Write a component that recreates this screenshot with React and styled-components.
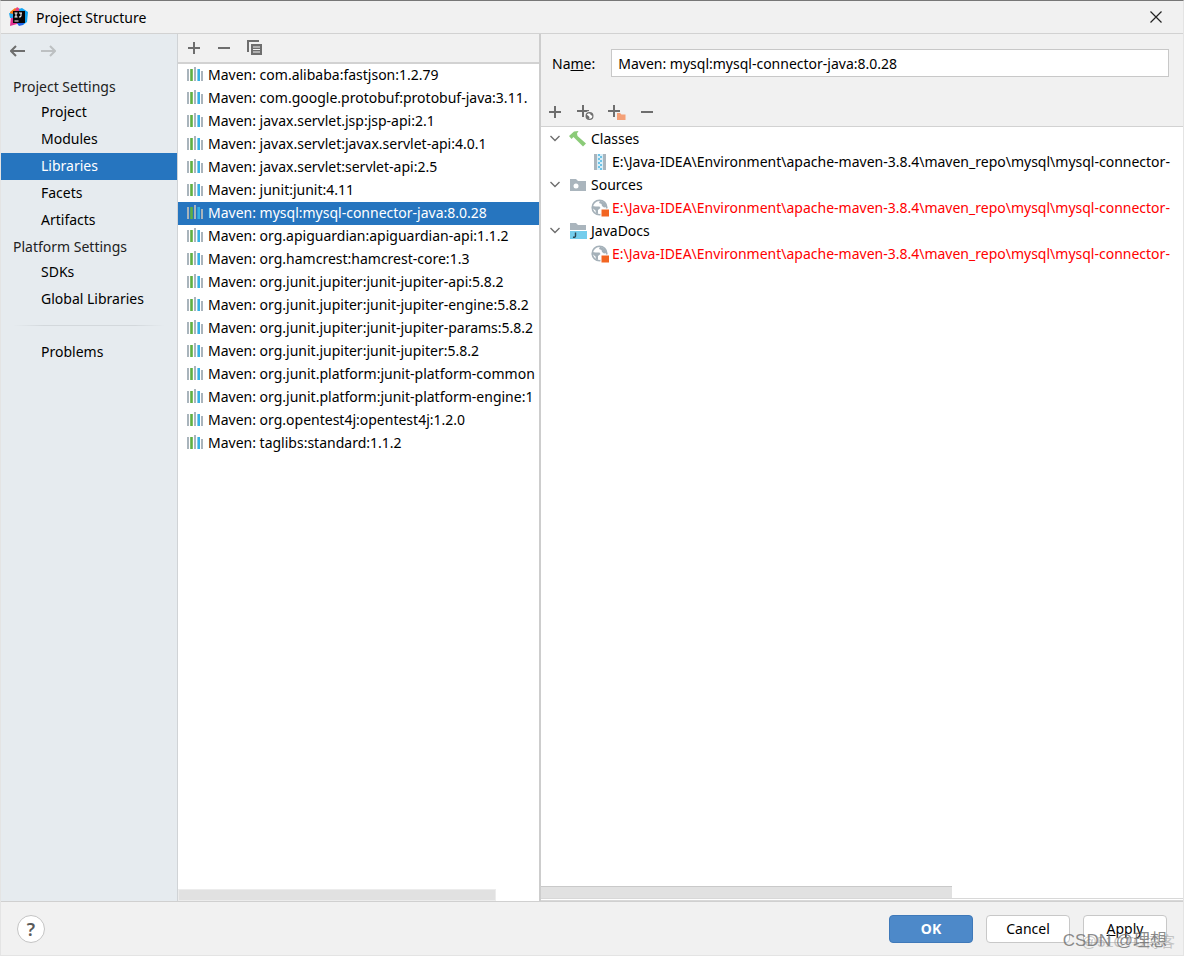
import { useState } from "react";
import styled, { createGlobalStyle } from "styled-components";

const projectItems = ["Project", "Modules", "Libraries", "Facets", "Artifacts"];
const platformItems = ["SDKs", "Global Libraries"];

const libraries = [
  "Maven: com.alibaba:fastjson:1.2.79",
  "Maven: com.google.protobuf:protobuf-java:3.11.",
  "Maven: javax.servlet.jsp:jsp-api:2.1",
  "Maven: javax.servlet:javax.servlet-api:4.0.1",
  "Maven: javax.servlet:servlet-api:2.5",
  "Maven: junit:junit:4.11",
  "Maven: mysql:mysql-connector-java:8.0.28",
  "Maven: org.apiguardian:apiguardian-api:1.1.2",
  "Maven: org.hamcrest:hamcrest-core:1.3",
  "Maven: org.junit.jupiter:junit-jupiter-api:5.8.2",
  "Maven: org.junit.jupiter:junit-jupiter-engine:5.8.2",
  "Maven: org.junit.jupiter:junit-jupiter-params:5.8.2",
  "Maven: org.junit.jupiter:junit-jupiter:5.8.2",
  "Maven: org.junit.platform:junit-platform-common",
  "Maven: org.junit.platform:junit-platform-engine:1",
  "Maven: org.opentest4j:opentest4j:1.2.0",
  "Maven: taglibs:standard:1.1.2",
];

const repoPath =
  "E:\\Java-IDEA\\Environment\\apache-maven-3.8.4\\maven_repo\\mysql\\mysql-connector-";

const IdeaLogo = () => (
  <svg width="20" height="20" viewBox="0 0 20 20" aria-hidden="true">
    <path d="M1 5 L6 1 L10 3 L6 11 L1 11 Z" fill="#f97a12" />
    <path d="M6 3 L8 0 L11 2 L12 5 L6 6 Z" fill="#e8407c" />
    <path d="M10 2 L13 1 L19 5 L18 15 L14 18 L11 10 Z" fill="#12a5f4" />
    <path d="M2 10 L6 9 L13 17 L8 17 L1 19 Z" fill="#e22f8f" />
    <path d="M7 15 L16 14 L14 18 L10 19 Z" fill="#1d62ea" />
    <path d="M0 6 L4 7 L4 11 L1 11 Z" fill="#22a7ee" />
    <rect x="4" y="4" width="12" height="12" fill="#080507" />
    <path
      d="M5.5 6h3M7 6v4M5.5 10h3M10 6h3M12 6v3q0 1-2 1M5.5 14h4"
      fill="none"
      stroke="#fff"
      strokeWidth="1.1"
    />
  </svg>
);

const LibraryIcon = () => (
  <svg width="17" height="16" viewBox="0 0 17 16" aria-hidden="true">
    <path d="M0 2h2v12H0zM7 0h2v14H7zM14 4h2v10h-2z" fill="#a9b4bc" />
    <path d="M3.2 2h2.6v12H3.2z" fill="#5fb043" />
    <path d="M10.400 2H13v12h-2.600z" fill="#35b1e4" />
  </svg>
);

const PlusIcon = () => (
  <svg width="14" height="14" viewBox="0 0 14 14" aria-hidden="true">
    <path d="M7 1v12M1 7h12" stroke="#6e6e6e" strokeWidth="2" />
  </svg>
);

const MinusIcon = () => (
  <svg width="14" height="14" viewBox="0 0 14 14" aria-hidden="true">
    <path d="M1 7h12" stroke="#6e6e6e" strokeWidth="2" />
  </svg>
);

const CopyIcon = () => (
  <svg width="16" height="16" viewBox="0 0 16 16" aria-hidden="true">
    <path d="M1 12V1h11" fill="none" stroke="#6e6e6e" strokeWidth="2" />
    <path d="M4 4h11v11H4z" fill="#6e6e6e" />
    <path d="M6 7h7M6 9.5h7M6 12h7" stroke="#f1f1f1" strokeWidth="1" />
  </svg>
);

const PlusWebIcon = () => (
  <svg width="18" height="16" viewBox="0 0 18 16" aria-hidden="true">
    <path d="M7 1v12M1 7h12" stroke="#6e6e6e" strokeWidth="2" />
    <circle cx="13.500" cy="12" r="5" fill="#f1f1f1" />
    <circle cx="13.500" cy="12" r="3.400" fill="#fff" stroke="#6e6e6e" strokeWidth="1.200" />
    <path d="M10 10.500l2 1 1.500 1.500-.500 2-2-.5-1-2zM13 9l3 .5 1 2.500-1.500-.5-1-1z" fill="#6e6e6e" />
  </svg>
);

const PlusFolderIcon = () => (
  <svg width="18" height="16" viewBox="0 0 18 16" aria-hidden="true">
    <path d="M6 1v12M0 7h12" stroke="#6e6e6e" strokeWidth="2" />
    <path d="M8 8h10v8H8z" fill="#f1f1f1" />
    <path d="M9 9h3l1.500 1.500H17.500V16H9z" fill="#f4a077" />
  </svg>
);

const ArrowIcon = ({ flip, color }) => (
  <svg width="16" height="14" viewBox="0 0 16 14" aria-hidden="true">
    <path
      d={flip ? "M1 7h14M10 2l5 5-5 5" : "M15 7H1M6 2L1 7l5 5"}
      fill="none"
      stroke={color}
      strokeWidth="2"
    />
  </svg>
);

const ChevronIcon = () => (
  <svg width="10" height="7" viewBox="0 0 10 7" aria-hidden="true">
    <path d="M0.500 1l4.500 4.500L9.500 1" fill="none" stroke="#6e6e6e" strokeWidth="1.4" />
  </svg>
);

const HammerIcon = () => (
  <svg width="18" height="18" viewBox="0 0 18 18" aria-hidden="true">
    <path d="M0 6L5 1.500 9.500 1 8 3.500 8.500 6 17 13.500 14 16.500 6 8.500 4.500 7 2.500 9z" fill="#8bcb78" />
  </svg>
);

const ArchiveIcon = () => (
  <svg width="18" height="18" viewBox="0 0 18 18" aria-hidden="true">
    <path d="M3 1h3v16H3zM12 1h3v16h-3z" fill="#aab5bd" />
    <path d="M6 1h6v16H6z" fill="#d8eef8" />
    <path
      d="M7 2h2M9 4h2M7 6h2M9 8h2M7 10h2M9 12h2M7 14h2M9 16h2"
      stroke="#6cc3e8"
      strokeWidth="2"
    />
  </svg>
);

const SourcesIcon = () => (
  <svg width="18" height="18" viewBox="0 0 18 18" aria-hidden="true">
    <path d="M1 3h6l2 2h8v10H1z" fill="#aab5bd" />
    <circle cx="7" cy="10" r="2.500" fill="#fff" />
  </svg>
);

const JavadocIcon = () => (
  <svg width="18" height="18" viewBox="0 0 18 18" aria-hidden="true">
    <path d="M1 1h6l2 2h8v5H1z" fill="#aab5bd" />
    <path d="M1 9h17v8H1z" fill="#74cdec" />
    <path d="M6.500 10.500v3.500q0 1.500-2.500 1.200" fill="none" stroke="#2b4753" strokeWidth="1.4" />
  </svg>
);

const WebErrorIcon = () => (
  <svg width="18" height="18" viewBox="0 0 18 18" aria-hidden="true">
    <circle cx="8.500" cy="8.500" r="7.300" fill="#fff" stroke="#a5b1b9" strokeWidth="1.600" />
    <path d="M1.500 7l3 .5h4l1 1.500-2.500 2v4l-2-.5-.5-3-2.500-2zM9 1.500l5 2.500 2 4-3 .5-2-1.500-.5-2-2.500-1z" fill="#a5b1b9" />
    <path d="M9.500 9.500H18V18H9.500z" fill="#fff" />
    <path d="M10.500 10.500H18V17.500H10.500z" fill="#f26522" />
  </svg>
);

const tree = [
  { title: "Classes", icon: <HammerIcon />, pathIcon: <ArchiveIcon />, missing: false },
  { title: "Sources", icon: <SourcesIcon />, pathIcon: <WebErrorIcon />, missing: true },
  { title: "JavaDocs", icon: <JavadocIcon />, pathIcon: <WebErrorIcon />, missing: true },
];

const App = () => {
  const [section, setSection] = useState("Libraries");
  const [selected, setSelected] = useState(6);
  const [name, setName] = useState(libraries[6]);

  const selectLibrary = (index) => {
    setSelected(index);
    setName(libraries[index]);
  };

  const renderItem = (item) => (
    <NavItem key={item} $active={item === section} onClick={() => setSection(item)}>
      {item}
    </NavItem>
  );

  return (
    <Dialog>
      <GlobalStyle />
      <TitleBar>
        <IdeaLogo />
        <Title>Project Structure</Title>
        <IconButton aria-label="Close">
          <svg width="12" height="12" viewBox="0 0 12 12" aria-hidden="true">
            <path d="M0.500 0.500l11 11M11.500 0.500l-11 11" stroke="#222" strokeWidth="1.2" />
          </svg>
        </IconButton>
      </TitleBar>

      <Body>
        <Sidebar>
          <History>
            <IconButton aria-label="Back">
              <ArrowIcon color="#6e6e6e" />
            </IconButton>
            <IconButton aria-label="Forward">
              <ArrowIcon flip color="#bdc0c2" />
            </IconButton>
          </History>
          <NavHeading>Project Settings</NavHeading>
          {projectItems.map(renderItem)}
          <NavHeading>Platform Settings</NavHeading>
          {platformItems.map(renderItem)}
          <Divider />
          {renderItem("Problems")}
        </Sidebar>

        <ListPane>
          <ListToolbar>
            <IconButton aria-label="Add library">
              <PlusIcon />
            </IconButton>
            <IconButton aria-label="Remove library">
              <MinusIcon />
            </IconButton>
            <IconButton aria-label="Copy library">
              <CopyIcon />
            </IconButton>
          </ListToolbar>
          <LibraryList>
            {libraries.map((library, index) => (
              <li key={library}>
                <LibraryRow $active={index === selected} onClick={() => selectLibrary(index)}>
                  <LibraryIcon />
                  {library}
                </LibraryRow>
              </li>
            ))}
          </LibraryList>
          <ListScroll />
        </ListPane>

        <Details>
          <NameRow>
            <label htmlFor="library-name">
              Na<u>m</u>e:
            </label>
            <NameInput
              id="library-name"
              value={name}
              onChange={(event) => setName(event.target.value)}
            />
          </NameRow>
          <RootsToolbar>
            <IconButton aria-label="Add root">
              <PlusIcon />
            </IconButton>
            <IconButton aria-label="Specify documentation URL">
              <PlusWebIcon />
            </IconButton>
            <IconButton aria-label="Exclude root">
              <PlusFolderIcon />
            </IconButton>
            <IconButton aria-label="Remove root">
              <MinusIcon />
            </IconButton>
          </RootsToolbar>
          <Tree>
            {tree.map(({ title, icon, pathIcon, missing }) => (
              <div key={title}>
                <TreeGroup>
                  <IconButton aria-label={"Collapse " + title}>
                    <ChevronIcon />
                  </IconButton>
                  <TreeLabel>
                    {icon}
                    {title}
                  </TreeLabel>
                </TreeGroup>
                <TreePath $missing={missing}>
                  {pathIcon}
                  {repoPath}
                </TreePath>
              </div>
            ))}
          </Tree>
          <DetailsScroll />
        </Details>
      </Body>

      <Footer>
        <HelpButton aria-label="Help">?</HelpButton>
        <Actions>
          <ActionButton $primary>OK</ActionButton>
          <ActionButton>Cancel</ActionButton>
          <ActionButton>
            <u>A</u>pply
          </ActionButton>
        </Actions>
        <BlogMark>@51CTO博客</BlogMark>
        <AuthorMark>CSDN @理想</AuthorMark>
      </Footer>
    </Dialog>
  );
};

const GlobalStyle = createGlobalStyle`
  * {
    box-sizing: border-box;
  }

  body {
    margin: 0;
  }

  body, button, input {
    font-family: "Noto Sans", "Noto Sans CJK SC", sans-serif;
    font-size: 14px;
    color: #000;
  }

  button {
    border: 0;
    padding: 0;
    background: none;
    cursor: pointer;
  }

  svg {
    flex: none;
    display: block;
  }
`;

const Dialog = styled.div`
  display: flex;
  flex-direction: column;
  height: 100vh;
  background-color: #f1f1f1;
  border: 1px solid #e4e4e4;
  border-top-color: #777;
`;

const TitleBar = styled.header`
  display: flex;
  align-items: center;
  gap: 7px;
  height: 33px;
  padding: 0 21px 0 8px;
  border-bottom: 1px solid #d2d2d2;
`;

const Title = styled.h1`
  flex: 1;
  margin: 0;
  font-size: 14px;
  font-weight: 400;
`;

const IconButton = styled.button`
  display: flex;
  align-items: center;
`;

const Body = styled.main`
  flex: 1;
  display: flex;
  min-height: 0;
  border-bottom: 1px solid #d0d0d0;
`;

const Sidebar = styled.nav`
  flex: none;
  display: flex;
  flex-direction: column;
  width: 177px;
  background-color: #e6ebef;
  border-right: 1px solid #d0d3d6;
`;

const History = styled.div`
  display: flex;
  align-items: center;
  gap: 14px;
  height: 34px;
  margin-bottom: 6px;
  padding: 0 9px;
`;

const NavHeading = styled.h2`
  margin: 0;
  padding-left: 12px;
  font-size: 14px;
  font-weight: 400;
  line-height: 25px;
  color: #222;
`;

const NavItem = styled.button`
  height: 27px;
  padding: 0 0 2px 40px;
  text-align: left;
  color: ${({ $active }) => ($active ? "#fff" : "#000")};
  background-color: ${({ $active }) => ($active ? "#2675bf" : "transparent")};
`;

const Divider = styled.hr`
  width: 152px;
  height: 1px;
  margin: 12px auto 13px;
  border: 0;
  background: linear-gradient(90deg, transparent, #d3d8dc 20%, #d3d8dc 80%, transparent);
`;

const ListPane = styled.section`
  flex: none;
  display: flex;
  flex-direction: column;
  width: 363px;
  background-color: #fff;
  border-right: 2px solid #cdcdcd;
`;

const ListToolbar = styled.div`
  display: flex;
  align-items: center;
  gap: 16px;
  height: 30px;
  padding-left: 9px;
  background-color: #f1f1f1;
  border-bottom: 2px solid #d2d2d2;
`;

const LibraryList = styled.ul`
  flex: 1;
  margin: 0;
  padding: 0;
  list-style: none;
  overflow: hidden;
`;

const LibraryRow = styled.button`
  display: flex;
  align-items: center;
  gap: 4px;
  width: 100%;
  height: 23px;
  padding: 0 0 2px 9px;
  white-space: nowrap;
  color: ${({ $active }) => ($active ? "#fff" : "#000")};
  background-color: ${({ $active }) => ($active ? "#2675bf" : "transparent")};
`;

const ListScroll = styled.div`
  width: 88%;
  height: 12px;
  background-color: #e1e1e1;
  border: 1px solid #ececec;
`;

const Details = styled.section`
  flex: 1;
  display: flex;
  flex-direction: column;
  min-width: 0;
`;

const NameRow = styled.div`
  display: flex;
  align-items: center;
  gap: 16px;
  height: 60px;
  padding: 0 14px 2px 11px;
`;

const NameInput = styled.input`
  flex: 1;
  min-width: 0;
  height: 28px;
  padding: 0 6px;
  background-color: #fff;
  border: 1px solid #c8c8c8;
  outline: none;
`;

const RootsToolbar = styled.div`
  display: flex;
  align-items: center;
  gap: 14px;
  height: 33px;
  padding: 4px 7px 0;
  border-bottom: 1px solid #d2d2d2;
`;

const Tree = styled.div`
  flex: 1;
  background-color: #fff;
  overflow: hidden;
`;

const TreeGroup = styled.div`
  display: flex;
  align-items: center;
  gap: 9px;
  height: 23px;
  padding-left: 9px;
`;

const TreeLabel = styled.span`
  display: flex;
  align-items: center;
  gap: 4px;
`;

const TreePath = styled.div`
  display: flex;
  align-items: center;
  gap: 3px;
  height: 23px;
  padding-left: 50px;
  white-space: nowrap;
  color: ${({ $missing }) => ($missing ? "#f00" : "#000")};
`;

const DetailsScroll = styled.div`
  height: 15px;
  background-color: #fff;
  border-bottom: 3px double #d8d8d8;

  &::before {
    content: "";
    display: block;
    width: 64%;
    height: 11px;
    background-color: #e1e1e1;
    border-top: 1px solid #c9c9c9;
  }
`;

const Footer = styled.footer`
  position: relative;
  display: flex;
  align-items: center;
  justify-content: space-between;
  height: 53px;
  padding: 0 16px;
`;

const HelpButton = styled.button`
  width: 28px;
  height: 28px;
  border: 1px solid #c4c4c4;
  border-radius: 50%;
  background-color: #fff;
  color: #5a5a5a;
  font-size: 18px;
  font-weight: 600;
  line-height: 24px;
`;

const Actions = styled.div`
  display: flex;
  gap: 13px;
`;

const ActionButton = styled.button`
  width: 84px;
  height: 28px;
  border: 1px solid ${({ $primary }) => ($primary ? "#3f79b9" : "#c8c8c8")};
  border-radius: 4px;
  background-color: ${({ $primary }) => ($primary ? "#4d89c9" : "#fff")};
  color: ${({ $primary }) => ($primary ? "#fff" : "#000")};
  font-weight: ${({ $primary }) => ($primary ? 700 : 400)};
`;

const Watermark = styled.span`
  position: absolute;
  bottom: 4px;
  font-family: "Liberation Sans", "Noto Sans CJK SC", sans-serif;
  white-space: nowrap;
  pointer-events: none;
`;

const BlogMark = styled(Watermark)`
  right: 8px;
  font-size: 15px;
  color: rgba(150, 150, 150, 0.5);
`;

const AuthorMark = styled(Watermark)`
  right: 16px;
  font-size: 17px;
  color: rgba(110, 110, 110, 0.8);
`;

export default App;
